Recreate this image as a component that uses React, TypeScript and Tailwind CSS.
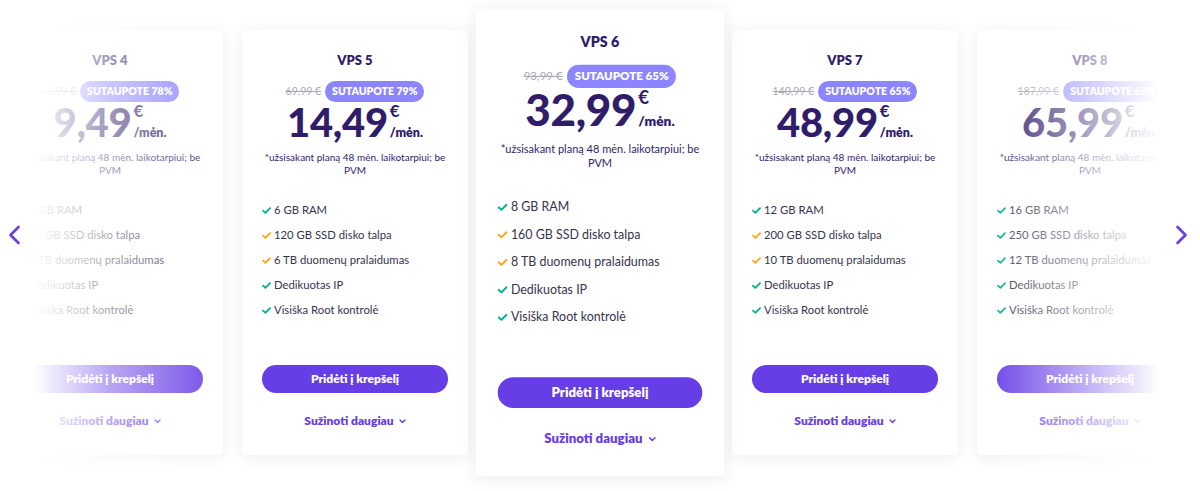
import React from "react";

type Plan = {
  name: string;
  old: string;
  save: string;
  price: string;
  ram: string;
  ssd: string;
  bw: string;
  allGreen?: boolean;
  featured?: boolean;
};

const plans: Plan[] = [
  { name: "VPS 4", old: "43,99 €", save: "78%", price: "9,49", ram: "4 GB RAM", ssd: "80 GB SSD disko talpa", bw: "4 TB duomenų pralaidumas" },
  { name: "VPS 5", old: "69,99 €", save: "79%", price: "14,49", ram: "6 GB RAM", ssd: "120 GB SSD disko talpa", bw: "6 TB duomenų pralaidumas" },
  { name: "VPS 6", old: "93,99 €", save: "65%", price: "32,99", ram: "8 GB RAM", ssd: "160 GB SSD disko talpa", bw: "8 TB duomenų pralaidumas", featured: true },
  { name: "VPS 7", old: "140,99 €", save: "65%", price: "48,99", ram: "12 GB RAM", ssd: "200 GB SSD disko talpa", bw: "10 TB duomenų pralaidumas" },
  { name: "VPS 8", old: "187,99 €", save: "65%", price: "65,99", ram: "16 GB RAM", ssd: "250 GB SSD disko talpa", bw: "12 TB duomenų pralaidumas", allGreen: true },
];

function Check({ color }: { color: string }) {
  return (
    <svg width="9" height="7" viewBox="0 0 9 7" className="mr-[3px] shrink-0">
      <polyline points="1,3.6 3.4,5.8 8,1.2" fill="none" stroke={color} strokeWidth="1.8" strokeLinecap="round" strokeLinejoin="round" />
    </svg>
  );
}

function Card({ plan }: { plan: Plan }) {
  const green = "#00b090";
  const orange = plan.allGreen ? green : "#ffa41b";
  const features: [string, string][] = [
    [plan.ram, green],
    [plan.ssd, orange],
    [plan.bw, orange],
    ["Dedikuotas IP", green],
    ["Visiška Root kontrolė", green],
  ];

  return (
    <div
      className={
        "flex h-[425px] w-[226px] shrink-0 flex-col items-center rounded-[4px] bg-white px-[20px] pt-[22px] shadow-[0_2px_16px_rgba(29,30,32,0.08)] " +
        (plan.featured ? "z-10 scale-110" : "")
      }
    >
      <h3 className="text-[13px] leading-[16px] font-extrabold text-[#2f1c6a]">{plan.name}</h3>

      <div className="mt-[13px] flex h-[21px] items-center gap-[4px]">
        <span className="text-[10.5px] text-[#a7a7b3] line-through">{plan.old}</span>
        <span className="flex h-[21px] items-center rounded-full bg-[#8c85ff] px-[7px] text-[10.5px] font-extrabold text-white">
          SUTAUPOTE {plan.save}
        </span>
      </div>

      <div className="mt-[1px] flex items-start text-[#2f1c6a]">
        <span className="text-[40px] leading-[38px] font-black tracking-[-0.3px]">{plan.price}</span>
        <div className="flex h-[36px] flex-col justify-between pl-[2px]">
          <span className="text-[17px] leading-[15px] font-bold">€</span>
          <span className="text-[12.5px] leading-[12px] font-extrabold">/mėn.</span>
        </div>
      </div>

      <p className="mt-[10px] text-center text-[10px] leading-[13px] text-[#2f1c6a]">
        *užsisakant planą 48 mėn. laikotarpiui; be PVM
      </p>

      <ul className="mt-[21px] flex w-full flex-col">
        {features.map(([t, c]) => (
          <li key={t} className="flex h-[25px] items-center text-[11.3px] text-[#36344d]">
            <Check color={c} />
            {t}
          </li>
        ))}
      </ul>

      <button className="mt-[42px] h-[28px] w-full rounded-full bg-[#673de6] text-[12px] font-extrabold text-white">
        Pridėti į krepšelį
      </button>

      <a className="mt-[20px] flex items-center gap-[5px] text-[12px] leading-[16px] font-extrabold text-[#673de6]">
        Sužinoti daugiau
        <svg width="7" height="5" viewBox="0 0 7 5">
          <polyline points="1,1 3.5,3.5 6,1" fill="none" stroke="#673de6" strokeWidth="1.4" strokeLinecap="round" strokeLinejoin="round" />
        </svg>
      </a>
    </div>
  );
}

export default function App() {
  return (
    <div className="relative h-[491px] w-full overflow-hidden bg-white font-['Lato',sans-serif]">
      <div className="flex justify-center gap-[19px] pt-[30px]">
        {plans.map((p) => (
          <Card key={p.name} plan={p} />
        ))}
      </div>

      <div className="pointer-events-none absolute top-0 left-0 z-20 h-full w-[240px] bg-linear-to-r from-white from-[14%] via-white/55 via-[45%] to-transparent" />
      <div className="pointer-events-none absolute top-0 right-0 z-20 h-full w-[220px] bg-linear-to-l from-white from-[18%] to-transparent" />

      <button className="absolute top-[225px] left-[8px] z-30">
        <svg width="13" height="20" viewBox="0 0 13 20">
          <polyline points="10.5,2 2.5,10 10.5,18" fill="none" stroke="#673de6" strokeWidth="2.6" strokeLinecap="round" strokeLinejoin="round" />
        </svg>
      </button>
      <button className="absolute top-[225px] right-[12px] z-30">
        <svg width="13" height="20" viewBox="0 0 13 20">
          <polyline points="2.5,2 10.5,10 2.5,18" fill="none" stroke="#673de6" strokeWidth="2.6" strokeLinecap="round" strokeLinejoin="round" />
        </svg>
      </button>
    </div>
  );
}
